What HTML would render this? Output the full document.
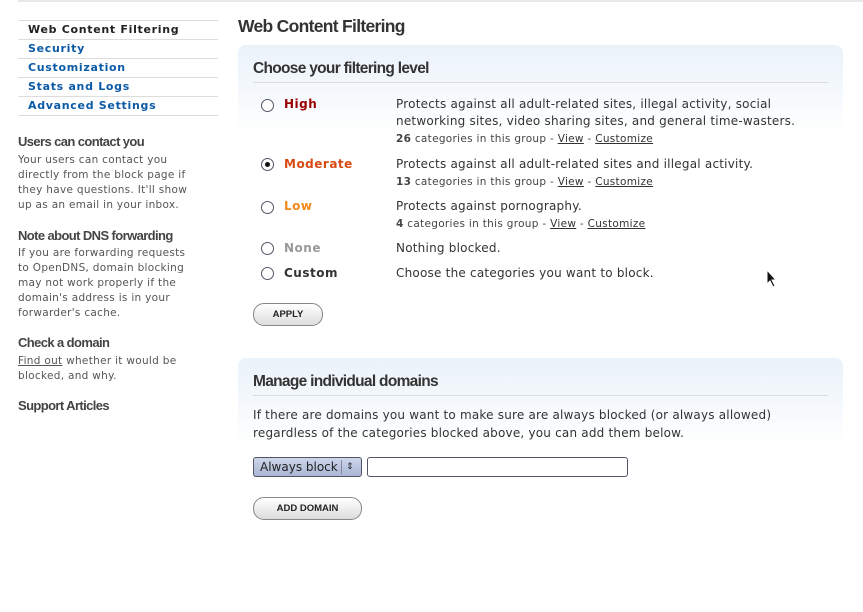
<!DOCTYPE html>
<html><head><meta charset="utf-8">
<style>
*{margin:0;padding:0;box-sizing:border-box}
body{width:863px;height:612px;background:#fff;position:relative;overflow:hidden;font-family:"DejaVu Sans","Liberation Sans",sans-serif;font-size:11px;color:#333}
.a{position:absolute;white-space:nowrap}
.topbar{position:absolute;left:18px;top:0;width:845px;height:2px;background:#e8e8e8}
.nav{position:absolute;left:18px;width:200px;height:19px;border-top:1px solid #ddd;font-weight:bold;font-size:11px;letter-spacing:0.7px;padding-left:10px;line-height:17px;color:#0b5aa6}
.h3{font-family:"Liberation Sans",sans-serif;font-weight:bold;font-size:13px;letter-spacing:-0.6px;color:#444}
.p{color:#555;font-size:10.5px;line-height:15px;letter-spacing:0.3px}
.panel{position:absolute;left:238px;width:605px;border-radius:8px;background:linear-gradient(#eaf2fa,#fff 90px)}
.ph{position:absolute;left:15px;right:15px;font-family:"Liberation Sans",sans-serif;font-weight:bold;font-size:15.5px;letter-spacing:-0.7px;color:#333;border-bottom:1px solid #ddd;height:24px;padding-top:1px}
.radio{position:absolute;width:13px;height:13px;border:1px solid #556;border-radius:50%;background:#fff;left:261px}
.lvl{position:absolute;left:284px;font-weight:bold;font-size:12px;letter-spacing:0.5px}
.d{position:absolute;left:396px;font-size:12px;line-height:17px;color:#333;letter-spacing:0.22px}
.s{font-size:10.5px;color:#444;letter-spacing:0.3px}
.s b{font-weight:bold}
.s u{color:#333}
.btn{position:absolute;border:1px solid #888;border-radius:11px;background:linear-gradient(#fff,#ddd);font-family:"Liberation Sans",sans-serif;font-weight:bold;font-size:9.5px;text-align:center;color:#222}
</style></head><body>
<div class="topbar"></div>
<div class="nav" style="top:20px;color:#222">Web Content Filtering</div>
<div class="nav" style="top:39px">Security</div>
<div class="nav" style="top:58px">Customization</div>
<div class="nav" style="top:77px">Stats and Logs</div>
<div class="nav" style="top:96px">Advanced Settings</div>
<div class="nav" style="top:115px;height:1px"></div>

<div class="a h3" style="left:18px;top:134px">Users can contact you</div>
<div class="a p" style="left:18px;top:153px">Your users can contact you<br>directly from the block page if<br>they have questions. It'll show<br>up as an email in your inbox.</div>
<div class="a h3" style="left:18px;top:228px">Note about DNS forwarding</div>
<div class="a p" style="left:18px;top:246px">If you are forwarding requests<br>to OpenDNS, domain blocking<br>may not work properly if the<br>domain's address is in your<br>forwarder's cache.</div>
<div class="a h3" style="left:18px;top:335px">Check a domain</div>
<div class="a p" style="left:18px;top:354px"><u>Find out</u> whether it would be<br>blocked, and why.</div>
<div class="a h3" style="left:18px;top:398px">Support Articles</div>

<div class="a" style="left:238px;top:16px;font-family:'Liberation Sans',sans-serif;font-weight:bold;font-size:17.5px;letter-spacing:-0.7px;color:#333">Web Content Filtering</div>

<div class="panel" style="top:45px;height:300px"><div class="ph" style="top:14px">Choose your filtering level</div></div>
<div class="panel" style="top:358px;height:190px"><div class="ph" style="top:14px">Manage individual domains</div></div>

<div class="radio" style="top:99px"></div>
<div class="lvl" style="top:97px;color:#990000">High</div>
<div class="d" style="top:96px">Protects against all adult-related sites, illegal activity, social<br>networking sites, video sharing sites, and general time-wasters.<br><span class="s"><b>26</b> categories in this group - <u>View</u> - <u>Customize</u></span></div>

<div class="radio" style="top:158px"><div style="position:absolute;left:3px;top:3px;width:5px;height:5px;border-radius:50%;background:#111"></div></div>
<div class="lvl" style="top:157px;color:#d84a13">Moderate</div>
<div class="d" style="top:156px">Protects against all adult-related sites and illegal activity.<br><span class="s"><b>13</b> categories in this group - <u>View</u> - <u>Customize</u></span></div>

<div class="radio" style="top:201px"></div>
<div class="lvl" style="top:199px;color:#f28a1a">Low</div>
<div class="d" style="top:198px">Protects against pornography.<br><span class="s"><b>4</b> categories in this group - <u>View</u> - <u>Customize</u></span></div>

<div class="radio" style="top:242px"></div>
<div class="lvl" style="top:241px;color:#999">None</div>
<div class="d" style="top:240px">Nothing blocked.</div>

<div class="radio" style="top:267px"></div>
<div class="lvl" style="top:266px;color:#333">Custom</div>
<div class="d" style="top:265px">Choose the categories you want to block.</div>

<div class="btn" style="left:253px;top:303px;width:70px;height:23px;line-height:21px">APPLY</div>

<div class="a" style="left:253px;top:406px;font-size:12px;line-height:18px;color:#333;letter-spacing:0.2px">If there are domains you want to make sure are always blocked (or always allowed)<br>regardless of the categories blocked above, you can add them below.</div>

<div class="a" style="left:253px;top:457px;width:109px;height:20px;border:1px solid #556;border-radius:3px;background:linear-gradient(#cdd6ea,#a9b6d4);font-size:12px;line-height:18px;padding-left:6px;color:#222">Always block<span style="position:absolute;left:87px;top:2px;height:14px;border-left:1px solid #889"></span><span style="position:absolute;left:92px;top:0;font-size:9px">&#8661;</span></div>
<div class="a" style="left:367px;top:457px;width:261px;height:20px;border:1px solid #556;border-radius:3px;background:#fff"></div>

<div class="btn" style="left:253px;top:497px;width:109px;height:23px;line-height:21px">ADD DOMAIN</div>

<svg class="a" style="left:766px;top:269px" width="12" height="20" viewBox="0 0 12 20"><path d="M1 1 L1 15 L4 12 L7 18 L9 17 L6 11 L10 11 Z" fill="#111" stroke="#fff" stroke-width="1"/></svg>
</body></html>
